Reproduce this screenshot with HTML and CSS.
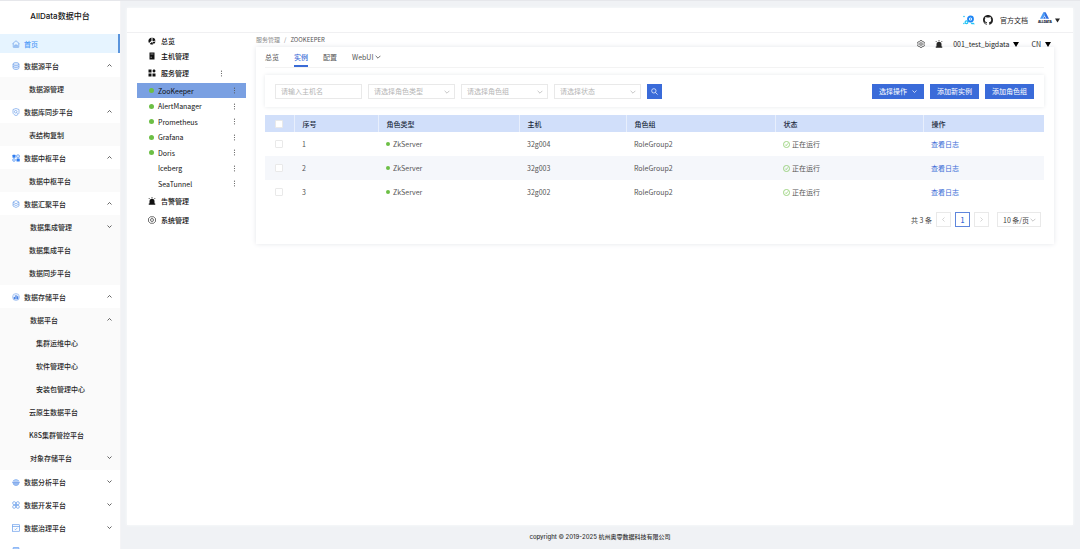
FILE: index.html
```html
<!DOCTYPE html>
<html lang="zh-CN">
<head>
<meta charset="utf-8">
<title>AllData数据中台</title>
<link rel="stylesheet" href="styles.css">
</head>
<body>
<svg class="defs" aria-hidden="true">
  <symbol id="down" viewBox="0 0 10 10"><path d="M1 3l4 4 4-4" fill="none" stroke="currentColor" stroke-width="1.4"/></symbol>
  <symbol id="up" viewBox="0 0 10 10"><path d="M1 7l4-4 4 4" fill="none" stroke="currentColor" stroke-width="1.4"/></symbol>
  <symbol id="left" viewBox="0 0 10 10"><path d="M7 1L3 5l4 4" fill="none" stroke="currentColor" stroke-width="1.2"/></symbol>
  <symbol id="right" viewBox="0 0 10 10"><path d="M3 1l4 4-4 4" fill="none" stroke="currentColor" stroke-width="1.2"/></symbol>
  <symbol id="dots" viewBox="0 0 4 12"><g fill="currentColor"><circle cx="2" cy="2" r="1"/><circle cx="2" cy="6" r="1"/><circle cx="2" cy="10" r="1"/></g></symbol>
  <symbol id="caret" viewBox="0 0 10 8"><path d="M0 0h10L5 8z" fill="currentColor"/></symbol>
  <symbol id="ok" viewBox="0 0 16 16"><g fill="none" stroke="currentColor" stroke-width="1.6"><circle cx="8" cy="8" r="7"/><path d="M5 8.200l2.300 2.400L11.300 5.500"/></g></symbol>
  <symbol id="alarm" viewBox="0 0 16 16"><path d="M3 13V8.500a5 5 0 0110 0V13h1.500v2.500h-13V13zM7.300 0h1.400v2.500H7.300zM2 2l1.600 1.600-.9.9L1.100 2.900zM14 2l-1.600 1.600.9.9 1.600-1.600z" fill="currentColor"/></symbol>
</svg>
<div class="app">
  <aside class="side">
    <h1 class="brand">AllData数据中台</h1>
    <nav class="nav">
      <a class="item home" href="#"><svg class="ico" viewBox="0 0 16 16"><g fill="none" stroke="currentColor" stroke-width="1.200"><path d="M1 7.500L8 1.500l7 6M2.500 6.500v8h11v-8"/><path d="M5.500 14.500V10h5v4.500M8 10v4.500"/></g></svg><span>首页</span></a>

      <button class="item"><svg class="ico" viewBox="0 0 16 16"><g fill="#e3edfc" stroke="currentColor" stroke-width="1.200"><path d="M2 4v8c0 1.500 2.700 3 6 3s6-1.500 6-3V4"/><ellipse cx="8" cy="4" rx="6" ry="2.800"/><path d="M2 8c0 1.500 2.700 2.800 6 2.800S14 9.500 14 8" fill="none"/></g></svg><span>数据源平台</span><svg class="arr"><use href="#up"/></svg></button>
      <div class="sub"><a class="item" href="#">数据源管理</a></div>

      <button class="item"><svg class="ico" viewBox="0 0 16 16"><g fill="none" stroke="currentColor" stroke-width="1.200"><path d="M8 1l6 2v6c0 3-3 5-6 6.200C5 14 2 12 2 9V3z"/><circle cx="7.500" cy="7.500" r="2.600"/><path d="M9.500 9.500l2 2"/></g></svg><span>数据库同步平台</span><svg class="arr"><use href="#up"/></svg></button>
      <div class="sub"><a class="item" href="#">表结构复制</a></div>

      <button class="item"><svg class="ico" viewBox="0 0 16 16"><rect x="1" y="1.500" width="6" height="6" rx="1" fill="#2f7df0"/><circle cx="12" cy="4.500" r="3.200" fill="#cfe2fd" stroke="#2f7df0"/><circle cx="4" cy="12" r="2.800" fill="#cfe2fd" stroke="#2f7df0"/><rect x="9" y="9" width="6.500" height="6" rx="1" fill="#2f7df0"/></svg><span>数据中枢平台</span><svg class="arr"><use href="#up"/></svg></button>
      <div class="sub"><a class="item" href="#">数据中枢平台</a></div>

      <button class="item"><svg class="ico" viewBox="0 0 16 16"><g fill="none" stroke="currentColor" stroke-width="1.200"><path d="M8 1l6 3.200-6 3.300-6-3.300z"/><path d="M2 4.500V12l6 3 6-3V4.500M2 8l6 3.200L14 8"/></g></svg><span>数据汇聚平台</span><svg class="arr"><use href="#up"/></svg></button>
      <div class="sub sub-end">
        <button class="item nest">数据集成管理<svg class="arr"><use href="#down"/></svg></button>
        <a class="item" href="#">数据集成平台</a>
        <a class="item" href="#">数据同步平台</a>
      </div>

      <button class="item"><svg class="ico" viewBox="0 0 16 16"><circle cx="8" cy="8" r="7" fill="#e3edfc" stroke="#7aa7e8"/><path d="M3.500 8h2.200v4.500H3.500zM6.900 4.500h2.200v8H6.900zM10.300 6.500h2.200v6h-2.200z" fill="#2f6fe0"/></svg><span>数据存储平台</span><svg class="arr"><use href="#up"/></svg></button>
      <div class="sub sub-end">
        <button class="item nest">数据平台<svg class="arr"><use href="#up"/></svg></button>
        <a class="item deep" href="#">集群运维中心</a>
        <a class="item deep" href="#">软件管理中心</a>
        <a class="item deep" href="#">安装包管理中心</a>
        <a class="item" href="#">云原生数据平台</a>
        <a class="item" href="#">K8S集群管控平台</a>
        <button class="item nest">对象存储平台<svg class="arr"><use href="#down"/></svg></button>
      </div>

      <button class="item"><svg class="ico" viewBox="0 0 16 16"><path d="M2.500 6a6 5 0 0111 0z" fill="#cfe2fd" stroke="currentColor"/><path d="M.5 7.500h15v2H.5z" fill="#5b8fe8"/><path d="M2 11h12c-1 3-3.500 4-6 4s-5-1-6-4z" fill="#9fbdf0" stroke="currentColor"/></svg><span>数据分析平台</span><svg class="arr"><use href="#down"/></svg></button>
      <button class="item"><svg class="ico" viewBox="0 0 16 16"><g fill="none" stroke="currentColor" stroke-width="1.300"><circle cx="4.300" cy="4.300" r="3"/><circle cx="11.700" cy="4.300" r="3"/><circle cx="4.300" cy="11.700" r="3"/><circle cx="11.700" cy="11.700" r="3"/><path d="M6 6l4 4M10 6l-4 4"/></g></svg><span>数据开发平台</span><svg class="arr"><use href="#down"/></svg></button>
      <button class="item"><svg class="ico" viewBox="0 0 16 16"><g fill="none" stroke="currentColor" stroke-width="1.300"><rect x="1" y="1.500" width="14" height="13"/><path d="M1 5h14M5 9.500l2 2 4-4"/></g></svg><span>数据治理平台</span><svg class="arr"><use href="#down"/></svg></button>
      <a class="item" href="#"><svg class="ico" viewBox="0 0 16 16"><rect x="2" y="1" width="12" height="14" rx="1" fill="#a9c9f8" stroke="#4a8cf0"/></svg></a>
    </nav>
  </aside>

  <div class="body">
    <main class="page">
      <header class="top">
        <svg class="logo-gear" viewBox="0 0 24 20"><circle cx="15" cy="8" r="5" fill="none" stroke="#1e86f5" stroke-width="3.600"/><circle cx="15" cy="8" r="1.500" fill="#1e86f5"/><circle cx="7" cy="14.500" r="2.800" fill="none" stroke="#22c4f5" stroke-width="2.400"/><circle cx="2" cy="3" r="1.600" fill="#22c4f5"/><circle cx="1.800" cy="17" r="1.500" fill="#22c4f5"/><path d="M15 15.500h6l3 3h-7z" fill="#22c4f5"/></svg>
        <svg class="logo-hub" viewBox="0 0 16 16"><path fill="#222" d="M8 0C3.580 0 0 3.580 0 8c0 3.540 2.290 6.530 5.470 7.590.4.070.55-.17.55-.38 0-.19-.01-.82-.01-1.490-2.010.37-2.530-.49-2.690-.94-.09-.23-.48-.94-.82-1.130-.28-.15-.68-.52-.01-.53.63-.01 1.080.58 1.230.82.72 1.210 1.870.87 2.330.66.07-.52.28-.87.51-1.070-1.780-.2-3.640-.89-3.640-3.950 0-.87.31-1.590.82-2.150-.08-.2-.36-1.020.08-2.120 0 0 .67-.21 2.200.82.64-.18 1.320-.27 2-.27s1.360.09 2 .27c1.530-1.040 2.200-.82 2.200-.82.44 1.100.16 1.920.08 2.120.51.56.82 1.270.82 2.150 0 3.070-1.870 3.750-3.650 3.950.29.25.54.73.54 1.480 0 1.070-.01 1.930-.01 2.200 0 .21.15.46.55.38A8.010 8.010 0 0016 8c0-4.420-3.580-8-8-8z"/></svg>
        <a class="doc" href="#">官方文档</a>
        <button class="user"><span class="mark"><svg viewBox="0 0 20 14"><path d="M7.500 0h5L20 14h-6L10 6z" fill="#2f6ee0"/><path d="M7.500 0L0 14h6l6-10z" fill="#4d9bf5"/><path d="M10 9l3 5H7z" fill="#2f6ee0"/></svg><b>ALLDATA</b></span><svg class="tri"><use href="#caret"/></svg></button>
      </header>

      <div class="content">
        <nav class="menu">
          <a class="m m-over" href="#"><svg class="mi" viewBox="0 0 16 16"><path d="M7 1v6.500L2 12A7.200 7.200 0 017 1zM9 1a7.200 7.200 0 016 6l-5 1.500-1-1zM15 9a7.200 7.200 0 01-3.500 5L9 9.800zM3.500 13.500L8 10l2.500 4.700a7 7 0 01-7-1.200z" fill="currentColor"/></svg>总览</a>
          <a class="m m-host" href="#"><svg class="mi" viewBox="0 0 16 16"><path d="M3 1h10v14H3z" fill="currentColor"/><path d="M5 4h6M5 10.500h3" stroke="#fff"/></svg>主机管理</a>
          <div class="m m-svc"><a href="#"><svg class="mi" viewBox="0 0 16 16"><path d="M1 1h6v6H1zM1 9h6v6H1zM9 9h6v6H9zM12 0l3.500 4L12 7.500 8.500 4z" fill="currentColor"/></svg>服务管理</a><button class="more" aria-label="更多"><svg><use href="#dots"/></svg></button></div>
          <ul class="svc">
            <li class="on"><i class="dot"></i><a href="#">ZooKeeper</a><button class="more" aria-label="更多"><svg><use href="#dots"/></svg></button></li>
            <li><i class="dot"></i><a href="#">AlertManager</a><button class="more" aria-label="更多"><svg><use href="#dots"/></svg></button></li>
            <li><i class="dot"></i><a href="#">Prometheus</a><button class="more" aria-label="更多"><svg><use href="#dots"/></svg></button></li>
            <li><i class="dot"></i><a href="#">Grafana</a><button class="more" aria-label="更多"><svg><use href="#dots"/></svg></button></li>
            <li><i class="dot"></i><a href="#">Doris</a><button class="more" aria-label="更多"><svg><use href="#dots"/></svg></button></li>
            <li><i class="dot none"></i><a href="#">Iceberg</a><button class="more" aria-label="更多"><svg><use href="#dots"/></svg></button></li>
            <li><i class="dot none"></i><a href="#">SeaTunnel</a><button class="more" aria-label="更多"><svg><use href="#dots"/></svg></button></li>
          </ul>
          <a class="m m-low" href="#"><svg class="mi"><use href="#alarm"/></svg>告警管理</a>
          <a class="m m-low" href="#"><svg class="mi" viewBox="0 0 16 16"><g fill="none" stroke="currentColor" stroke-width="1.200"><path d="M5 1.500h6L15 5v6l-4 3.500H5L1 11V5z"/><circle cx="8" cy="8" r="3"/></g></svg>系统管理</a>
        </nav>

        <section class="work">
          <div class="crumb"><a href="#">服务管理</a><span>/</span><span class="cur">ZOOKEEPER</span></div>
          <div class="tools">
            <svg class="gear" viewBox="0 0 16 16"><g fill="none" stroke="#222" stroke-width="1.300"><path d="M6.500 1h3l.6 2 1.700 1 2-.5 1.500 2.500L13.800 7.500v1.200l1.500 1.500-1.500 2.500-2-.5-1.700 1-.6 2h-3l-.6-2-1.700-1-2 .5L.7 10.200l1.500-1.500V7.500L.7 6l1.500-2.500 2 .5 1.700-1z"/><circle cx="8" cy="8" r="2.600"/></g></svg>
            <svg class="bell"><use href="#alarm"/></svg>
            <button class="drop">001_test_bigdata<svg><use href="#caret"/></svg></button>
            <button class="drop">CN<svg><use href="#caret"/></svg></button>
          </div>

          <div class="card">
            <div class="tabs">
              <button>总览</button>
              <button class="on">实例</button>
              <button>配置</button>
              <button>WebUI<svg><use href="#down"/></svg></button>
            </div>

            <form class="filter">
              <input class="box" type="text" placeholder="请输入主机名" aria-label="主机名">
              <span class="sel"><select class="box" aria-label="角色类型"><option>请选择角色类型</option></select><svg><use href="#down"/></svg></span>
              <span class="sel"><select class="box" aria-label="角色组"><option>请选择角色组</option></select><svg><use href="#down"/></svg></span>
              <span class="sel"><select class="box" aria-label="状态"><option>请选择状态</option></select><svg><use href="#down"/></svg></span>
              <button class="btn find" type="button" aria-label="搜索"><svg viewBox="0 0 16 16"><g fill="none" stroke="#fff" stroke-width="1.600"><circle cx="6.500" cy="6.500" r="5"/><path d="M10.200 10.200L15 15"/></g></svg></button>
              <span class="acts">
                <button class="btn" type="button">选择操作<svg><use href="#down"/></svg></button>
                <button class="btn" type="button">添加新实例</button>
                <button class="btn" type="button">添加角色组</button>
              </span>
            </form>

            <table class="grid">
              <colgroup><col class="c1"><col class="c2"><col class="c3"><col class="c4"><col class="c5"><col class="c6"><col class="c7"></colgroup>
              <thead><tr><th class="ck"><input type="checkbox" aria-label="全选"></th><th>序号</th><th>角色类型</th><th>主机</th><th>角色组</th><th>状态</th><th>操作</th></tr></thead>
              <tbody>
                <tr><td class="ck"><input type="checkbox" aria-label="选择 1"></td><td>1</td><td><i class="live"></i>ZkServer</td><td>32g004</td><td>RoleGroup2</td><td><svg class="ok"><use href="#ok"/></svg>正在运行</td><td><a href="#">查看日志</a></td></tr>
                <tr><td class="ck"><input type="checkbox" aria-label="选择 2"></td><td>2</td><td><i class="live"></i>ZkServer</td><td>32g003</td><td>RoleGroup2</td><td><svg class="ok"><use href="#ok"/></svg>正在运行</td><td><a href="#">查看日志</a></td></tr>
                <tr><td class="ck"><input type="checkbox" aria-label="选择 3"></td><td>3</td><td><i class="live"></i>ZkServer</td><td>32g002</td><td>RoleGroup2</td><td><svg class="ok"><use href="#ok"/></svg>正在运行</td><td><a href="#">查看日志</a></td></tr>
              </tbody>
            </table>

            <div class="pager">
              <span>共 3 条</span>
              <button class="pg" disabled aria-label="上一页"><svg><use href="#left"/></svg></button>
              <button class="pg on">1</button>
              <button class="pg" disabled aria-label="下一页"><svg><use href="#right"/></svg></button>
              <span class="sel size"><select class="box" aria-label="每页条数"><option>10 条/页</option></select><svg><use href="#down"/></svg></span>
            </div>
          </div>
        </section>
      </div>
    </main>
    <footer class="foot">copyright © 2019-2025 杭州奥零数据科技有限公司</footer>
  </div>
</div>
</body>
</html>
```
FILE: styles.css
```css
* { box-sizing: border-box; }

body {
  margin: 0;
  font: 7px/12px "Noto Sans CJK SC", sans-serif;
  color: #262626;
  background: #f0f2f5;
}

a { color: inherit; text-decoration: none; }
button { padding: 0; border: 0; background: none; font: inherit; color: inherit; text-align: left; }
svg { display: block; flex: none; }
.defs { position: absolute; width: 0; height: 0; }

.app {
  display: flex;
  height: 100vh;
  overflow: hidden;
  border-top: 1px solid #e6e7eb;
}

/* sidebar */
.side {
  flex: none;
  width: 121px;
  overflow: hidden;
  background: #fff;
  border-right: 1px solid #f4f4f6;
}
.brand {
  margin: 0;
  height: 31px;
  font: 500 8px/31px Inter, "Noto Sans CJK SC", sans-serif;
  text-align: center;
  color: #111;
}
.nav { display: flex; flex-direction: column; font-weight: 500; }
.item {
  display: flex;
  align-items: center;
  gap: 4px;
  width: 100%;
  height: 23px;
  padding: 0 8px 0 12px;
}
.ico { width: 8px; height: 8px; color: #5a94e8; }
.arr { width: 5px; height: 5px; margin-left: auto; color: #222; }
.home {
  height: 19px;
  margin: 2px 0 1px;
  color: #4a98f7;
  background: #e6f4ff;
  border-right: 2px solid #5a94dc;
}
.sub { background: #fafafa; }
.sub .item { padding-left: 29px; }
.sub .nest { padding-left: 30px; }
.sub .nest, .sub .item { padding-right: 8px; }
.sub .deep { padding-left: 36px; }
.sub-end { padding-bottom: 1px; }

/* shell */
.body {
  flex: 1;
  display: flex;
  flex-direction: column;
  min-width: 0;
  padding: 7px 7px 0 6px;
}
.page {
  flex: 1;
  display: flex;
  flex-direction: column;
  background: #fff;
  box-shadow: 0 0 3px #fafbfc;
}
.foot {
  height: 24px;
  font: 500 6px/24px Inter, "Noto Sans CJK SC", sans-serif;
  text-align: center;
  color: #333;
}
.top {
  display: flex;
  align-items: center;
  justify-content: flex-end;
  height: 25px;
  padding-right: 13px;
  border-bottom: 1px solid #f0f0f2;
}
.logo-gear { width: 12px; height: 10px; }
.logo-hub { width: 10px; height: 10px; margin-left: 8px; }
.doc { margin-left: 7px; }
.user { display: flex; align-items: center; gap: 3px; margin-left: 10px; padding-bottom: 4px; }
.mark { display: flex; flex-direction: column; align-items: center; gap: 1px; }
.mark svg { width: 9px; height: 7px; }
.mark b { font: 900 3px/4px Inter, sans-serif; color: #123; }
.tri { width: 5px; height: 5px; margin-top: 4px; }

.content { flex: 1; display: flex; gap: 10px; padding: 0 19px 0 10px; }

/* service menu */
.menu { flex: none; width: 109px; font-weight: 500; color: #111; }
.m { display: flex; align-items: center; gap: 5px; padding-left: 11px; }
.m a { display: flex; align-items: center; gap: 5px; }
.mi { width: 8px; height: 8px; }
.m-over, .m-host { height: 15px; }
.m-svc { height: 20px; }
.m-svc .more { margin-left: 26px; }
.m-low { height: 19px; }
.svc { margin: 0; padding: 0; list-style: none; font-weight: 400; }
.svc li { display: flex; align-items: center; height: 15px; padding: 0 10px 0 12px; }
.svc li:nth-child(even) { height: 16px; }
.svc .on { background: #7aa0e2; }
.dot { width: 5px; height: 5px; margin-right: 4px; border-radius: 50%; background: #6cbf45; }
.none { background: none; }
.more { margin-left: auto; }
.more svg { width: 3px; height: 7px; color: #555; }

/* workspace */
.work { position: relative; flex: 1; min-width: 0; }
.crumb { display: flex; gap: 4px; height: 14px; padding-top: 1px; font-size: 6px; color: #888; }
.cur { color: #555; }
.tools {
  position: absolute;
  top: 5px;
  right: 3px;
  display: flex;
  align-items: center;
}
.gear, .bell { width: 8px; height: 8px; margin-right: 10px; }
.drop { display: flex; align-items: center; gap: 4px; }
.drop + .drop { margin-left: 12px; }
.drop svg { width: 6px; height: 5px; color: #000; }

.card {
  padding: 0 10px 17px 9px;
  background: #fff;
  box-shadow: 0 0 5px #e4e6ea;
}
.tabs {
  display: flex;
  gap: 15px;
  height: 21px;
  border-bottom: 1px solid #f3f3f3;
  color: #555;
}
.tabs button { display: flex; align-items: center; gap: 2px; padding-top: 2px; border-bottom: 2px solid transparent; }
.tabs .on { color: #3a6bd6; border-color: #3a6bd6; font-weight: 500; }
.tabs svg { width: 6px; height: 6px; }

.filter {
  display: flex;
  align-items: center;
  gap: 6px;
  height: 32px;
  margin: 7px 0 8px;
  padding: 0 10px;
  box-shadow: 0 0 4px #e6e8eb;
}
.box {
  appearance: none;
  width: 100%;
  height: 15px;
  margin: 0;
  padding: 0 5px;
  border: 1px solid #e9e9e9;
  border-radius: 0;
  background: #fff;
  font: inherit;
  color: #b5b5b5;
}
.box::placeholder { color: #b5b5b5; }
.filter > .box, .sel { flex: 0 1 87px; min-width: 0; }
.sel { position: relative; }
.sel select { display: block; }
.sel svg { position: absolute; right: 5px; top: 5px; width: 6px; height: 6px; color: #bbb; pointer-events: none; }
.btn {
  display: flex;
  align-items: center;
  height: 15px;
  padding: 0 7px;
  color: #fff;
  background: #3a6bd9;
}
.btn svg { width: 5px; height: 5px; margin-left: 5px; }
.find { width: 15px; padding: 0 4px; }
.find svg { width: 7px; height: 7px; margin: 0; }
.acts { display: flex; gap: 6px; margin-left: auto; }

.grid { width: 100%; table-layout: fixed; border-collapse: collapse; color: #555; }
.c1 { width: 29px; }
.c2 { width: 84px; }
.c3 { width: 141px; }
.c4 { width: 107px; }
.c5 { width: 149px; }
.c6 { width: 148px; }
.c7 { width: 121px; }
.grid th {
  height: 17px;
  padding: 0 8px;
  text-align: left;
  font-weight: 500;
  color: #222c40;
  background: #d1dffa;
}
.grid th + th { border-left: 1px solid #e8effc; }
.grid td { height: 24px; padding: 0 8px; }
.grid tr:nth-child(2) td { background: #f5f7fb; }
.grid .ck { padding: 0 0 0 10px; }
.grid a { color: #3a6bd6; }
.ck input {
  appearance: none;
  display: block;
  width: 8px;
  height: 8px;
  margin: 0;
  border: 1px solid #e9e9e9;
  border-radius: 1px;
  background: #fff;
}
.live { display: inline-block; width: 4px; height: 4px; margin-right: 3px; border-radius: 50%; background: #6cbf45; vertical-align: 1px; }
.ok { display: inline-block; width: 7px; height: 7px; margin-right: 2px; color: #7cc558; vertical-align: -1px; }

.pager { display: flex; align-items: center; justify-content: flex-end; gap: 4px; margin-top: 8px; padding-right: 3px; color: #444; }
.pg { display: flex; align-items: center; justify-content: center; width: 15px; height: 15px; border: 1px solid #e9e9e9; color: #bbb; }
.pg svg { width: 5px; height: 5px; }
.pg.on { color: #3a6bd6; border-color: #5f86dc; font-weight: 500; }
.size { flex: none; width: 44px; margin-left: 4px; }
.size .box { color: #444; }
```
